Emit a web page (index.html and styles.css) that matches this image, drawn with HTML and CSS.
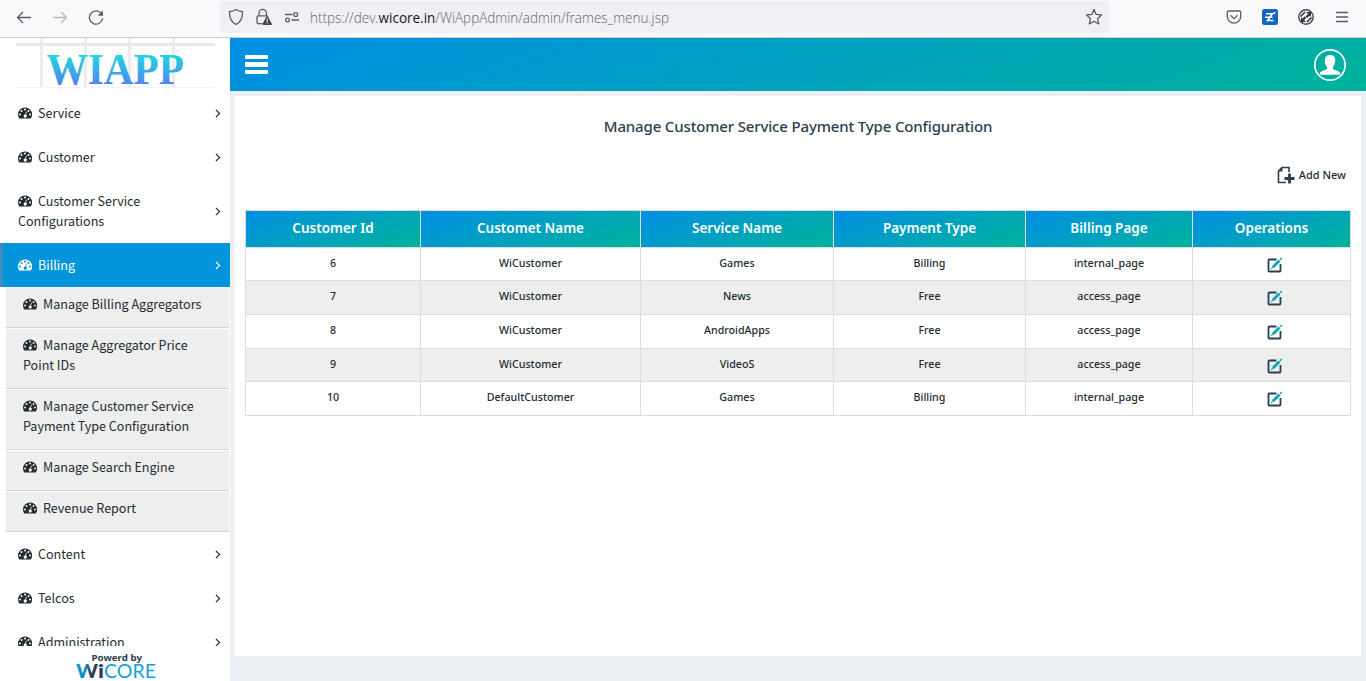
FILE: index.html
```
<!DOCTYPE html>
<html lang="en">
<head>
<meta charset="utf-8">
<title>WiApp Admin</title>
<link rel="stylesheet" href="styles.css">
</head>
<body>
<svg class="defs" width="0" height="0" aria-hidden="true">
  <symbol id="dash" viewBox="0 0 14 12">
    <path fill="currentColor" fill-rule="evenodd" d="M7 .5a7 7 0 0 0-7 7c0 1.400.4 2.600 1.050 3.750.1.170.25.25.45.25h11c.2 0 .35-.08.45-.25A7 7 0 0 0 7 .5zM2 6.500a1 1 0 1 1 0 2a1 1 0 1 1 0-2zM3.500 3a1 1 0 1 1 0 2a1 1 0 1 1 0-2zM7 1.500a1 1 0 1 1 0 2a1 1 0 1 1 0-2zM10.500 3a1 1 0 1 1 0 2a1 1 0 1 1 0-2zM12 6.500a1 1 0 1 1 0 2a1 1 0 1 1 0-2zM8.100 4.500l.7.2-.8 3.100a1.500 1.500 0 1 1-.7-.2z"/>
  </symbol>
  <symbol id="chev" viewBox="0 0 6 9"><path d="M.9.900l3.700 3.600-3.700 3.600" fill="none" stroke="currentColor" stroke-width="1.200"/></symbol>
  <symbol id="edit" viewBox="0 0 16 16">
    <path d="M9.500 2.500H2.300q-.8 0-.8.800v10.400q0 .8.800.8h10.400q.8 0 .8-.8V7" fill="none" stroke="#2c3e50" stroke-width="1.800"/>
    <path d="M5.500 8.500L11.500 2.500l2 2L7.500 10.500l-2.500.7z" fill="#00a7b5"/><path d="M13 2.800L14.800 1M4.200 11.800l.8-.8" stroke="#00a7b5" stroke-width="1.400"/>
  </symbol>
</svg>

<div class="browser">
  <div class="nav">
    <svg width="16" height="16" viewBox="0 0 16 16"><path d="M15 8.500H1.500M7 3L1.500 8.500 7 14" class="ln"/></svg>
    <svg class="off" width="16" height="16" viewBox="0 0 16 16"><path d="M1 8.500h13.500M9 3l5.500 5.500L9 14" class="ln"/></svg>
    <svg width="16" height="16" viewBox="0 0 16 16"><path d="M13.600 5A6.600 6.600 0 1 0 14.600 9.300" class="ln"/><path d="M15 1.500v5.300H9.700z" fill="#5b5b66"/></svg>
  </div>
  <div class="address">
    <svg width="16" height="18" viewBox="0 0 16 18"><path d="M8 1.500c2 1.400 4 2 6.500 2.200C14.700 9.500 13 14 8 16.500 3 14 1.300 9.500 1.500 3.700 4 3.500 6 2.900 8 1.500z" class="ln"/></svg>
    <svg width="16" height="18" viewBox="0 0 16 18"><path d="M6.500 15.700H2.200c-.7 0-1.200-.5-1.200-1.200V9c0-.7.5-1.200 1.200-1.200h8.600c.6 0 1 .4 1.100.9M3 7.800V5a3.700 3.700 0 0 1 7.400 0v2.800" class="ln"/><path d="M11.200 8.200c.4 0 .6.200.8.500l3.800 7c.3.600 0 1.300-.7 1.300H7.300c-.7 0-1-.7-.7-1.300l3.800-7c.2-.3.400-.5.800-.5z" fill="#45454f"/><path d="M11.200 10.700v3M11.200 14.600v1" stroke="#f0f0f4" stroke-width="1.200"/></svg>
    <svg width="16" height="18" viewBox="0 0 16 18"><path d="M1 6.500h7.500M7.500 12H15" class="ln"/><circle cx="11.700" cy="6.500" r="1.900" class="ln"/><circle cx="3.500" cy="12" r="1.900" class="ln"/></svg>
    <svg class="url" width="362" height="24"><text x="1" y="18" textLength="359" lengthAdjust="spacingAndGlyphs">https://dev.<tspan class="host">wicore.in</tspan>/WiAppAdmin/admin/frames_menu.jsp</text></svg>
    <svg class="star" width="18" height="18" viewBox="0 0 18 18"><path d="M9 1.500l2.200 4.900 5.300.6-3.900 3.600 1.100 5.400L9 13.300 4.300 16l1.100-5.400L1.500 7l5.300-.6z" class="ln" stroke-linejoin="round"/></svg>
  </div>
  <div class="tools">
    <svg width="16" height="16" viewBox="0 0 16 16"><path d="M2.500 2h11c.7 0 1.200.5 1.200 1.200V7.500a6.700 6.700 0 0 1-13.400 0V3.200C1.300 2.500 1.800 2 2.500 2zM4.500 6.300L8 9.600l3.500-3.300" class="ln"/></svg>
    <svg width="16" height="16" viewBox="0 0 16 16"><rect width="16" height="16" rx="2.500" fill="#1565c0"/><path d="M4 4.800h6.500L5.500 11.500h6M3 8.200h7.500M11.500 4.500l1.800-1" fill="none" stroke="#fff" stroke-width="1.500"/></svg>
    <svg width="16" height="16" viewBox="0 0 16 16"><circle cx="8" cy="8" r="7.200" fill="none" stroke="#45454f" stroke-width="1.400"/><path d="M2.500 7.500L7 3M9 13L13.500 8.500" stroke="#3a3a44" stroke-width="1.600"/><path d="M4.500 11.500L7.500 8M8.500 8.200L11.500 5" stroke="#3a3a44" stroke-width="2.300"/><path d="M8 3h5v5zM3 8v5h5z" fill="#3a3a44"/></svg>
    <svg width="16" height="16" viewBox="0 0 16 16"><path d="M2 3.500h12M2 8h12M2 12.500h12" class="ln"/></svg>
  </div>
</div>

<div class="app">
  <aside class="sidebar">
    <svg class="logo" width="230" height="53" viewBox="0 38 230 53">
      <defs><linearGradient id="wg" gradientUnits="userSpaceOnUse" x1="0" y1="55" x2="0" y2="84"><stop offset="0" stop-color="#1fd8dc"/><stop offset="1" stop-color="#4c86ee"/></linearGradient></defs>
      <path d="M16 44.500H215" stroke="#e8e8e8" stroke-width="3"/><path d="M41.500 38V88M85.500 38V88M129.500 38V88M173.500 38V88" stroke="#ececec" stroke-width="3"/><path d="M16 87.500H215" stroke="#f3f3f3"/>
      <text x="46.500" y="84" class="wiapp" textLength="137.500" lengthAdjust="spacingAndGlyphs">WIAPP</text>
    </svg>
    <nav class="menu">
      <a class="item"><span><svg class="d"><use href="#dash"/></svg>Service</span><svg class="c"><use href="#chev"/></svg></a>
      <a class="item"><span><svg class="d"><use href="#dash"/></svg>Customer</span><svg class="c"><use href="#chev"/></svg></a>
      <a class="item"><span><svg class="d"><use href="#dash"/></svg>Customer Service<br>Configurations</span><svg class="c"><use href="#chev"/></svg></a>
      <a class="item active"><span><svg class="d"><use href="#dash"/></svg>Billing</span><svg class="c"><use href="#chev"/></svg></a>
      <div class="sub">
        <a><svg class="d"><use href="#dash"/></svg>Manage Billing Aggregators</a>
        <a><svg class="d"><use href="#dash"/></svg>Manage Aggregator Price<br>Point IDs</a>
        <a><svg class="d"><use href="#dash"/></svg>Manage Customer Service<br>Payment Type Configuration</a>
        <a><svg class="d"><use href="#dash"/></svg>Manage Search Engine</a>
        <a><svg class="d"><use href="#dash"/></svg>Revenue Report</a>
      </div>
      <a class="item"><span><svg class="d"><use href="#dash"/></svg>Content</span><svg class="c"><use href="#chev"/></svg></a>
      <a class="item"><span><svg class="d"><use href="#dash"/></svg>Telcos</span><svg class="c"><use href="#chev"/></svg></a>
      <a class="item"><span><svg class="d"><use href="#dash"/></svg>Administration</span><svg class="c"><use href="#chev"/></svg></a>
    </nav>
    <svg class="powered" width="230" height="35" viewBox="0 646 230 35">
      <defs><linearGradient id="wl"><stop offset="0" stop-color="#0aa0e0"/><stop offset=".5" stop-color="#0e7fae"/><stop offset=".65" stop-color="#2c3e50"/></linearGradient></defs>
      <text x="91.500" y="661" class="pow" textLength="50.500" lengthAdjust="spacingAndGlyphs">Powerd by</text>
      <text x="76" y="677.500" class="wi" fill="url(#wl)" textLength="22" lengthAdjust="spacingAndGlyphs">W</text>
      <text x="98" y="677.500" class="wi" fill="#2c3e50" textLength="6" lengthAdjust="spacingAndGlyphs">i</text>
      <text x="104" y="677.500" class="core" textLength="52" lengthAdjust="spacingAndGlyphs">CORE</text>
    </svg>
  </aside>

  <main class="main">
    <header class="topbar">
      <div class="burger"><i></i><i></i><i></i></div>
      <svg width="34" height="34" viewBox="0 0 34 34"><circle cx="17" cy="17" r="15.200" fill="none" stroke="#fff" stroke-width="1.700"/><path d="M17 7c3.500 0 5.200 2 5.200 5.200 0 3-.9 5.300-2.200 6.700v2c1.500 1 5.500 1.800 7.200 3.600v2.300H6.800v-2.300c1.700-1.800 5.700-2.600 7.200-3.600v-2c-1.300-1.400-2.200-3.700-2.200-6.700C11.800 9 13.500 7 17 7z" fill="#fff"/></svg>
    </header>
    <section class="panel">
      <h1>Manage Customer Service Payment Type Configuration</h1>
      <div class="add">
        <svg width="18" height="18" viewBox="0 0 18 18"><path d="M12 6V1.500H5L1.500 5v11.500H9" fill="none" stroke="#2c3e50" stroke-width="1.600"/><path d="M1 5.500L5.500 1v4.500z" fill="#2c3e50"/><path d="M12.500 7.500v10M7.500 12.500h10" stroke="#2c3e50" stroke-width="2.800"/></svg>
        <span>Add New</span>
      </div>
      <div class="table">
        <div class="row head"><b>Customer Id</b><b>Customet Name</b><b>Service Name</b><b>Payment Type</b><b>Billing Page</b><b>Operations</b></div>
        <div class="row short"><span>6</span><span>WiCustomer</span><span>Games</span><span>Billing</span><span>internal_page</span><span><svg class="e"><use href="#edit"/></svg></span></div>
        <div class="row"><span>7</span><span>WiCustomer</span><span>News</span><span>Free</span><span>access_page</span><span><svg class="e"><use href="#edit"/></svg></span></div>
        <div class="row"><span>8</span><span>WiCustomer</span><span>AndroidApps</span><span>Free</span><span>access_page</span><span><svg class="e"><use href="#edit"/></svg></span></div>
        <div class="row short"><span>9</span><span>WiCustomer</span><span>VideoS</span><span>Free</span><span>access_page</span><span><svg class="e"><use href="#edit"/></svg></span></div>
        <div class="row"><span>10</span><span>DefaultCustomer</span><span>Games</span><span>Billing</span><span>internal_page</span><span><svg class="e"><use href="#edit"/></svg></span></div>
      </div>
    </section>
  </main>
</div>
</body>
</html>
```
FILE: styles.css
```
* { box-sizing: border-box; }
body { margin: 0; height: 681px; overflow: hidden; background: #fff; color: #222d32; font-family: "Noto Sans", sans-serif; }
.defs { position: absolute; }
svg { flex: none; display: block; }
.ln { fill: none; stroke: #5b5b66; stroke-width: 1.3; }

.browser { display: flex; height: 38px; padding-top: 1px; background: #f9f9fb; border-bottom: 1px solid #ccccd0; }
.nav { display: flex; width: 220px; height: 32px; padding-left: 16px; gap: 20px; align-items: center; }
.off { opacity: .4; }
.address { display: flex; width: 890px; height: 32px; padding: 0 7px 0 8px; gap: 12px; align-items: center; background: #f0f0f4; border-radius: 4px; }
.url { margin-left: -3px; }
.url text { font: 300 14px "Open Sans", sans-serif; fill: #66666f; }
.url .host { font-weight: 400; fill: #15141a; }
.star { margin-left: auto; }
.tools { display: flex; flex: 1; height: 32px; padding-left: 116px; gap: 20px; align-items: center; }

.app { display: flex; height: 643px; }
.sidebar { display: flex; flex-direction: column; width: 230px; }
.wiapp { font: bold 44px "Liberation Serif", serif; fill: url(#wg); }
.menu { height: 555px; overflow: hidden; font: 12.55px/20px "Noto Sans CJK SC", sans-serif; }
.item { display: flex; align-items: center; justify-content: space-between; padding: 12px 9px 12px 15px; border-left: 3px solid transparent; }
.item.active { background: #0494dc; border-left-color: #3c8dbc; color: #fff; }
.d { display: inline-block; width: 14px; height: 12px; margin-right: 6px; vertical-align: -1px; }
.c { width: 6px; height: 9px; }
.sub { padding: 0 1px 0 6px; }
.sub a { display: block; height: 41px; padding: 7px 10px 13px 17px; background: #eee; border-bottom: 1px solid #d2d2d2; box-shadow: inset 0 1px #fff; }
.sub a:has(br) { height: 61px; }
.pow { font: bold 9px "Noto Sans", sans-serif; fill: #2c3e50; }
.wi { font: 900 18.500px "Lato", sans-serif; }
.core { font: 19px "Lato", sans-serif; fill: #149fdb; }

.main { display: flex; flex-direction: column; flex: 1; background: #ecf0f5; }
.topbar { display: flex; justify-content: space-between; align-items: center; height: 53px; padding: 0 19px 0 15px; background: linear-gradient(160deg, #008fe4, #00b39b); }
.burger { display: grid; gap: 3px; width: 23px; }
.burger i { height: 4.400px; background: #fff; border-radius: 1px; }
.panel { width: 1126px; height: 560px; margin: 5px 0 0 5px; padding: 0 10px; background: #fff; }
h1 { margin: 0; padding-top: 20px; font-size: 15px; line-height: 21px; font-weight: 500; letter-spacing: -.15px; text-align: center; color: #2c3e50; }
.add { display: flex; justify-content: flex-end; gap: 4px; height: 18px; margin-top: 29px; padding-right: 5px; font-size: 11px; line-height: 18px; font-weight: 500; }
.table { margin-top: 26px; width: 1106px; border: 1px solid #ddd; border-bottom: 0; }
.row { display: grid; grid-template-columns: 175px 220px 193px 192px 167px 157px; height: 34px; }
.row > * { display: flex; align-items: center; justify-content: center; border-right: 1px solid #ddd; border-bottom: 1px solid #ddd; }
.row > :last-child { border-right: 0; }
.row.short { height: 33px; }
.row:nth-child(odd) { background: #eee; }
.row span { padding-bottom: 3px; font-size: 10.700px; font-weight: 500; }
.row span:last-child { padding-bottom: 0; }
.row.head { height: 37px; color: #fff; }
.row.head b { padding-bottom: 3px; font-size: 13.500px; font-weight: 600; background: linear-gradient(160deg, #008fe4, #00b39b); background-clip: padding-box; }
.e { width: 16px; height: 16px; margin: 1px 0 0 7px; }
```
